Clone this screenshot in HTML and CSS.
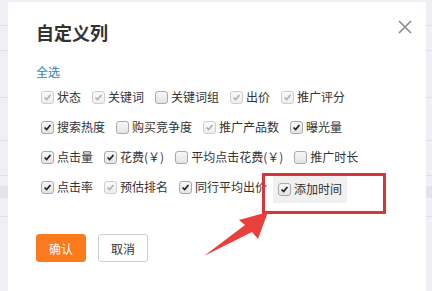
FILE: index.html
```html
<!DOCTYPE html>
<html lang="zh-CN">
<head>
  <meta charset="UTF-8" />
  <title>自定义列</title>
  <link rel="stylesheet" href="styles.css">
</head>
<body>
  <div class="dialog">
    <h1 class="title">自定义列</h1>
    <span class="close">
      <svg width="14" height="14" viewBox="0 0 14 14"><path d="M1 1 L13 13 M13 1 L1 13" stroke="#8a8a8a" stroke-width="1.6" fill="none"/></svg>
    </span>

    <a class="select-all">全选</a>

    <div class="options">
      <div class="row">
        <label class="opt"><span class="cb disabled"><svg viewBox="0 0 13 13"><path d="M3 6.5 L5.5 9 L10 3.5"/></svg></span>状态</label>
        <label class="opt"><span class="cb disabled"><svg viewBox="0 0 13 13"><path d="M3 6.5 L5.5 9 L10 3.5"/></svg></span>关键词</label>
        <label class="opt"><span class="cb"></span>关键词组</label>
        <label class="opt"><span class="cb disabled"><svg viewBox="0 0 13 13"><path d="M3 6.5 L5.5 9 L10 3.5"/></svg></span>出价</label>
        <label class="opt"><span class="cb disabled"><svg viewBox="0 0 13 13"><path d="M3 6.5 L5.5 9 L10 3.5"/></svg></span>推广评分</label>
      </div>
      <div class="row">
        <label class="opt"><span class="cb checked"><svg viewBox="0 0 13 13"><path d="M3 6.5 L5.5 9 L10 3.5"/></svg></span>搜索热度</label>
        <label class="opt"><span class="cb"></span>购买竞争度</label>
        <label class="opt"><span class="cb disabled"><svg viewBox="0 0 13 13"><path d="M3 6.5 L5.5 9 L10 3.5"/></svg></span>推广产品数</label>
        <label class="opt"><span class="cb checked"><svg viewBox="0 0 13 13"><path d="M3 6.5 L5.5 9 L10 3.5"/></svg></span>曝光量</label>
      </div>
      <div class="row">
        <label class="opt"><span class="cb checked"><svg viewBox="0 0 13 13"><path d="M3 6.5 L5.5 9 L10 3.5"/></svg></span>点击量</label>
        <label class="opt"><span class="cb checked"><svg viewBox="0 0 13 13"><path d="M3 6.5 L5.5 9 L10 3.5"/></svg></span>花费(￥)</label>
        <label class="opt"><span class="cb"></span>平均点击花费(￥)</label>
        <label class="opt"><span class="cb"></span>推广时长</label>
      </div>
      <div class="row">
        <label class="opt"><span class="cb checked"><svg viewBox="0 0 13 13"><path d="M3 6.5 L5.5 9 L10 3.5"/></svg></span>点击率</label>
        <label class="opt"><span class="cb disabled"><svg viewBox="0 0 13 13"><path d="M3 6.5 L5.5 9 L10 3.5"/></svg></span>预估排名</label>
        <label class="opt"><span class="cb checked"><svg viewBox="0 0 13 13"><path d="M3 6.5 L5.5 9 L10 3.5"/></svg></span>同行平均出价</label>
        <label class="opt hover"><span class="cb checked"><svg viewBox="0 0 13 13"><path d="M3 6.5 L5.5 9 L10 3.5"/></svg></span>添加时间</label>
      </div>
    </div>

    <div class="actions">
      <button class="btn primary">确认</button>
      <button class="btn">取消</button>
    </div>

    <!-- annotation -->
    <div class="mark"></div>
    <svg class="arrow" width="432" height="291" viewBox="0 0 432 291">
      <path d="M204 256 L245 225 L239 220 L268 212 L258 239 L252 232 Z" fill="#e8403a"/>
    </svg>
  </div>
</body>
</html>
```

FILE: styles.css
```css
body {
  margin: 0;
  height: 291px;
  overflow: hidden;
  font-family: "Noto Sans CJK SC", "Liberation Sans", sans-serif;
  color: #333;
  background-color: #eef0f4;
  background-image:
    linear-gradient(#eef0f4 25px, #dde0e6 25px, #dde0e6 26px, #eef0f4 26px, #eef0f4 50px, #dde0e6 50px, #dde0e6 51px, #eef0f4 51px, #eef0f4 97px, #dde0e6 97px, #dde0e6 98px, #eef0f4 98px, #eef0f4 140px, #dde0e6 140px, #dde0e6 141px, #eef0f4 141px, #eef0f4 175px, #dde0e6 175px, #dde0e6 176px, #eef0f4 176px, #eef0f4 186px, #e2e4e9 186px, #e2e4e9 198px, #eef0f4 198px, #eef0f4 216px, #dde0e6 216px, #dde0e6 217px, #eef0f4 217px);
}

.dialog {
  position: relative;
  box-sizing: border-box;
  margin: 2px 0 0 8px;
  width: 418px;
  height: 300px;
  padding: 18px 28px;
  background: #fff;
}

.title {
  margin: 0;
  font-size: 18px;
  line-height: 24px;
  font-weight: bold;
  color: #333;
}

.close {
  position: absolute;
  top: 18px;
  right: 14px;
  width: 14px;
  height: 14px;
}

.close svg {
  display: block;
}

.select-all {
  display: block;
  margin-top: 19px;
  font-size: 12px;
  line-height: 18px;
  color: #2e7fba;
}

.options {
  margin-top: 1px;
}

.row {
  display: flex;
  align-items: center;
  gap: 11px;
  height: 30px;
  padding-left: 5px;
}

.opt {
  display: flex;
  align-items: center;
  gap: 3px;
  font-size: 12px;
  line-height: 18px;
  color: #333;
  white-space: nowrap;
}

.opt.hover {
  margin-left: -5px;
  margin-top: 4px;
  padding: 5px 5px;
  background: #f0f0f0;
}

.cb {
  box-sizing: border-box;
  width: 13px;
  height: 13px;
  border: 1px solid #a9a9a9;
  border-radius: 3px;
  background: linear-gradient(#f7f7f7, #e4e4e4);
}

.cb svg {
  display: block;
  width: 11px;
  height: 11px;
}

.cb svg path {
  fill: none;
  stroke: #222;
  stroke-width: 2;
}

.cb.disabled {
  border-color: #cdcdcd;
  background: linear-gradient(#fafafa, #eeeeee);
}

.cb.disabled svg path {
  stroke: #b0b0b0;
}

.actions {
  display: flex;
  gap: 12px;
  margin-top: 32px;
}

.btn {
  box-sizing: border-box;
  width: 50px;
  height: 28px;
  padding: 0;
  font-family: inherit;
  font-size: 12px;
  color: #333;
  background: #fff;
  border: 1px solid #cfcfcf;
  border-radius: 3px;
}

.btn.primary {
  color: #fff;
  background: #fb7a1e;
  border-color: #fb7a1e;
}

.mark {
  position: absolute;
  left: 254px;
  top: 171px;
  width: 124px;
  height: 41px;
  box-sizing: border-box;
  border: 3px solid #d9343a;
}

.arrow {
  position: absolute;
  left: -8px;
  top: -2px;
  pointer-events: none;
}
```
